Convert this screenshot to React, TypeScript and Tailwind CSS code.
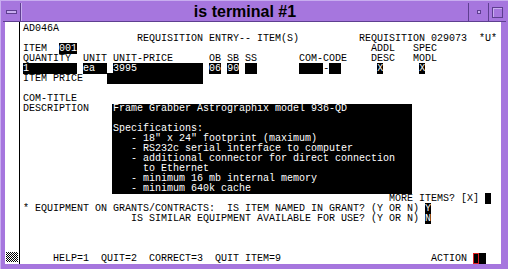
const Row = ({ children }: { children?: React.ReactNode }) => (
    <div className="h-[10px] leading-[10px] whitespace-pre">{children}</div>
);

const Inv = ({ children }: { children: React.ReactNode }) => (
    <span className="bg-black text-white">{children}</span>
);

export default function App() {
    const description = [
        "Frame Grabber Astrographix model 936-QD",
        "",
        "Specifications:",
        "   - 18\" x 24\" footprint (maximum)",
        "   - RS232c serial interface to computer",
        "   - additional connector for direct connection",
        "     to Ethernet",
        "   - minimum 16 mb internal memory",
        "   - minimum 640k cache",
    ];

    return (
        <div className="w-[508px] h-[269px] bg-[#a676de] p-[2px] flex flex-col border-t border-l border-[#c8adf0] overflow-hidden">
            {/* Title bar */}
            <div className="h-[19px] flex items-stretch border-b border-[#5e3f90]">
                <div className="w-[18px] border-r border-[#5e3f90] flex items-center justify-center">
                    <div className="w-[11px] h-[4px] bg-[#c8adf0] border border-[#5e3f90]" />
                </div>
                <div className="flex-1 border-l border-[#c8adf0] text-center text-black font-bold text-[16px] leading-[18px] font-['Liberation_Sans',Arial,sans-serif]">
                    is terminal #1
                </div>
                <div className="w-[20px] border-l border-[#5e3f90] flex items-center justify-center">
                    <div className="w-[4px] h-[4px] bg-[#c8adf0] border border-[#5e3f90]" />
                </div>
                <div className="w-[18px] border-l border-[#5e3f90] flex items-center justify-center">
                    <div className="w-[11px] h-[11px] border border-[#5e3f90] shadow-[inset_1px_1px_0_#c8adf0]" />
                </div>
            </div>

            {/* Body */}
            <div className="flex-1 flex pl-[2px] pr-[5px] pb-[3px]">
                <div className="w-[14px] bg-white flex flex-col justify-end items-center pb-[2px]">
                    <svg width="12" height="10" viewBox="0 0 12 10">
                        <defs>
                            <pattern id="chk" width="2" height="2" patternUnits="userSpaceOnUse">
                                <rect width="2" height="2" fill="#fff" />
                                <rect width="1" height="1" fill="#000" />
                                <rect x="1" y="1" width="1" height="1" fill="#000" />
                            </pattern>
                        </defs>
                        <rect width="12" height="10" fill="url(#chk)" />
                    </svg>
                </div>
                <div className="w-[1px] bg-black" />
                <div className="flex-1 bg-white text-black pt-[2px] pl-[3px] font-['Liberation_Mono','Courier_New',monospace] text-[10px]">
                    <Row>AD046A</Row>
                    <Row>{"                   REQUISITION ENTRY-- ITEM(S)          REQUISITION 029073  *U*"}</Row>
                    <Row>
                        {"ITEM  "}<Inv>001</Inv>
                        {"                                                 ADDL   SPEC"}
                    </Row>
                    <Row>{"QUANTITY  UNIT UNIT-PRICE      OB SB SS       COM-CODE    DESC   MODL"}</Row>
                    <Row>
                        <Inv>{"1        "}</Inv>{" "}
                        <Inv>{"ea  "}</Inv>{" "}
                        <Inv>{"3995           "}</Inv>{" "}
                        <Inv>06</Inv>{" "}
                        <Inv>90</Inv>{" "}
                        <Inv>{"  "}</Inv>
                        {"       "}
                        <Inv>{"    "}</Inv>{"-"}<Inv>{"  "}</Inv>
                        {"      "}<Inv>X</Inv>
                        {"      "}<Inv>X</Inv>
                    </Row>
                    <Row>
                        {"ITEM PRICE    "}<Inv>{"                "}</Inv>
                    </Row>
                    <Row />
                    <Row>COM-TITLE</Row>

                    {/* Description block */}
                    <div className="flex">
                        <div className="w-[89px]">
                            <Row>DESCRIPTION</Row>
                        </div>
                        <div className="w-[300px] bg-black text-white pl-[1px]">
                            {description.map((line, i) => (
                                <Row key={i}>{line}</Row>
                            ))}
                        </div>
                    </div>

                    <Row>
                        {"                                                             MORE ITEMS? [X] "}
                        <Inv>{" "}</Inv>
                    </Row>
                    <Row>
                        {"* EQUIPMENT ON GRANTS/CONTRACTS:  IS ITEM NAMED IN GRANT? (Y OR N) "}
                        <Inv>Y</Inv>
                    </Row>
                    <Row>
                        {"                  IS SIMILAR EQUIPMENT AVAILABLE FOR USE? (Y OR N) "}
                        <Inv>N</Inv>
                    </Row>
                    <Row />
                    <Row />
                    <Row />
                    <div className="h-[10px] leading-[10px] whitespace-pre flex items-stretch">
                        {"     HELP=1  QUIT=2  CORRECT=3  QUIT ITEM=9                         ACTION "}
                        <span className="w-[6px] h-[11px] -mt-[1px] bg-black border border-[#e02020]" />
                        <span className="w-[7px] h-[11px] -mt-[1px] bg-black" />
                    </div>
                </div>
            </div>
        </div>
    );
}
